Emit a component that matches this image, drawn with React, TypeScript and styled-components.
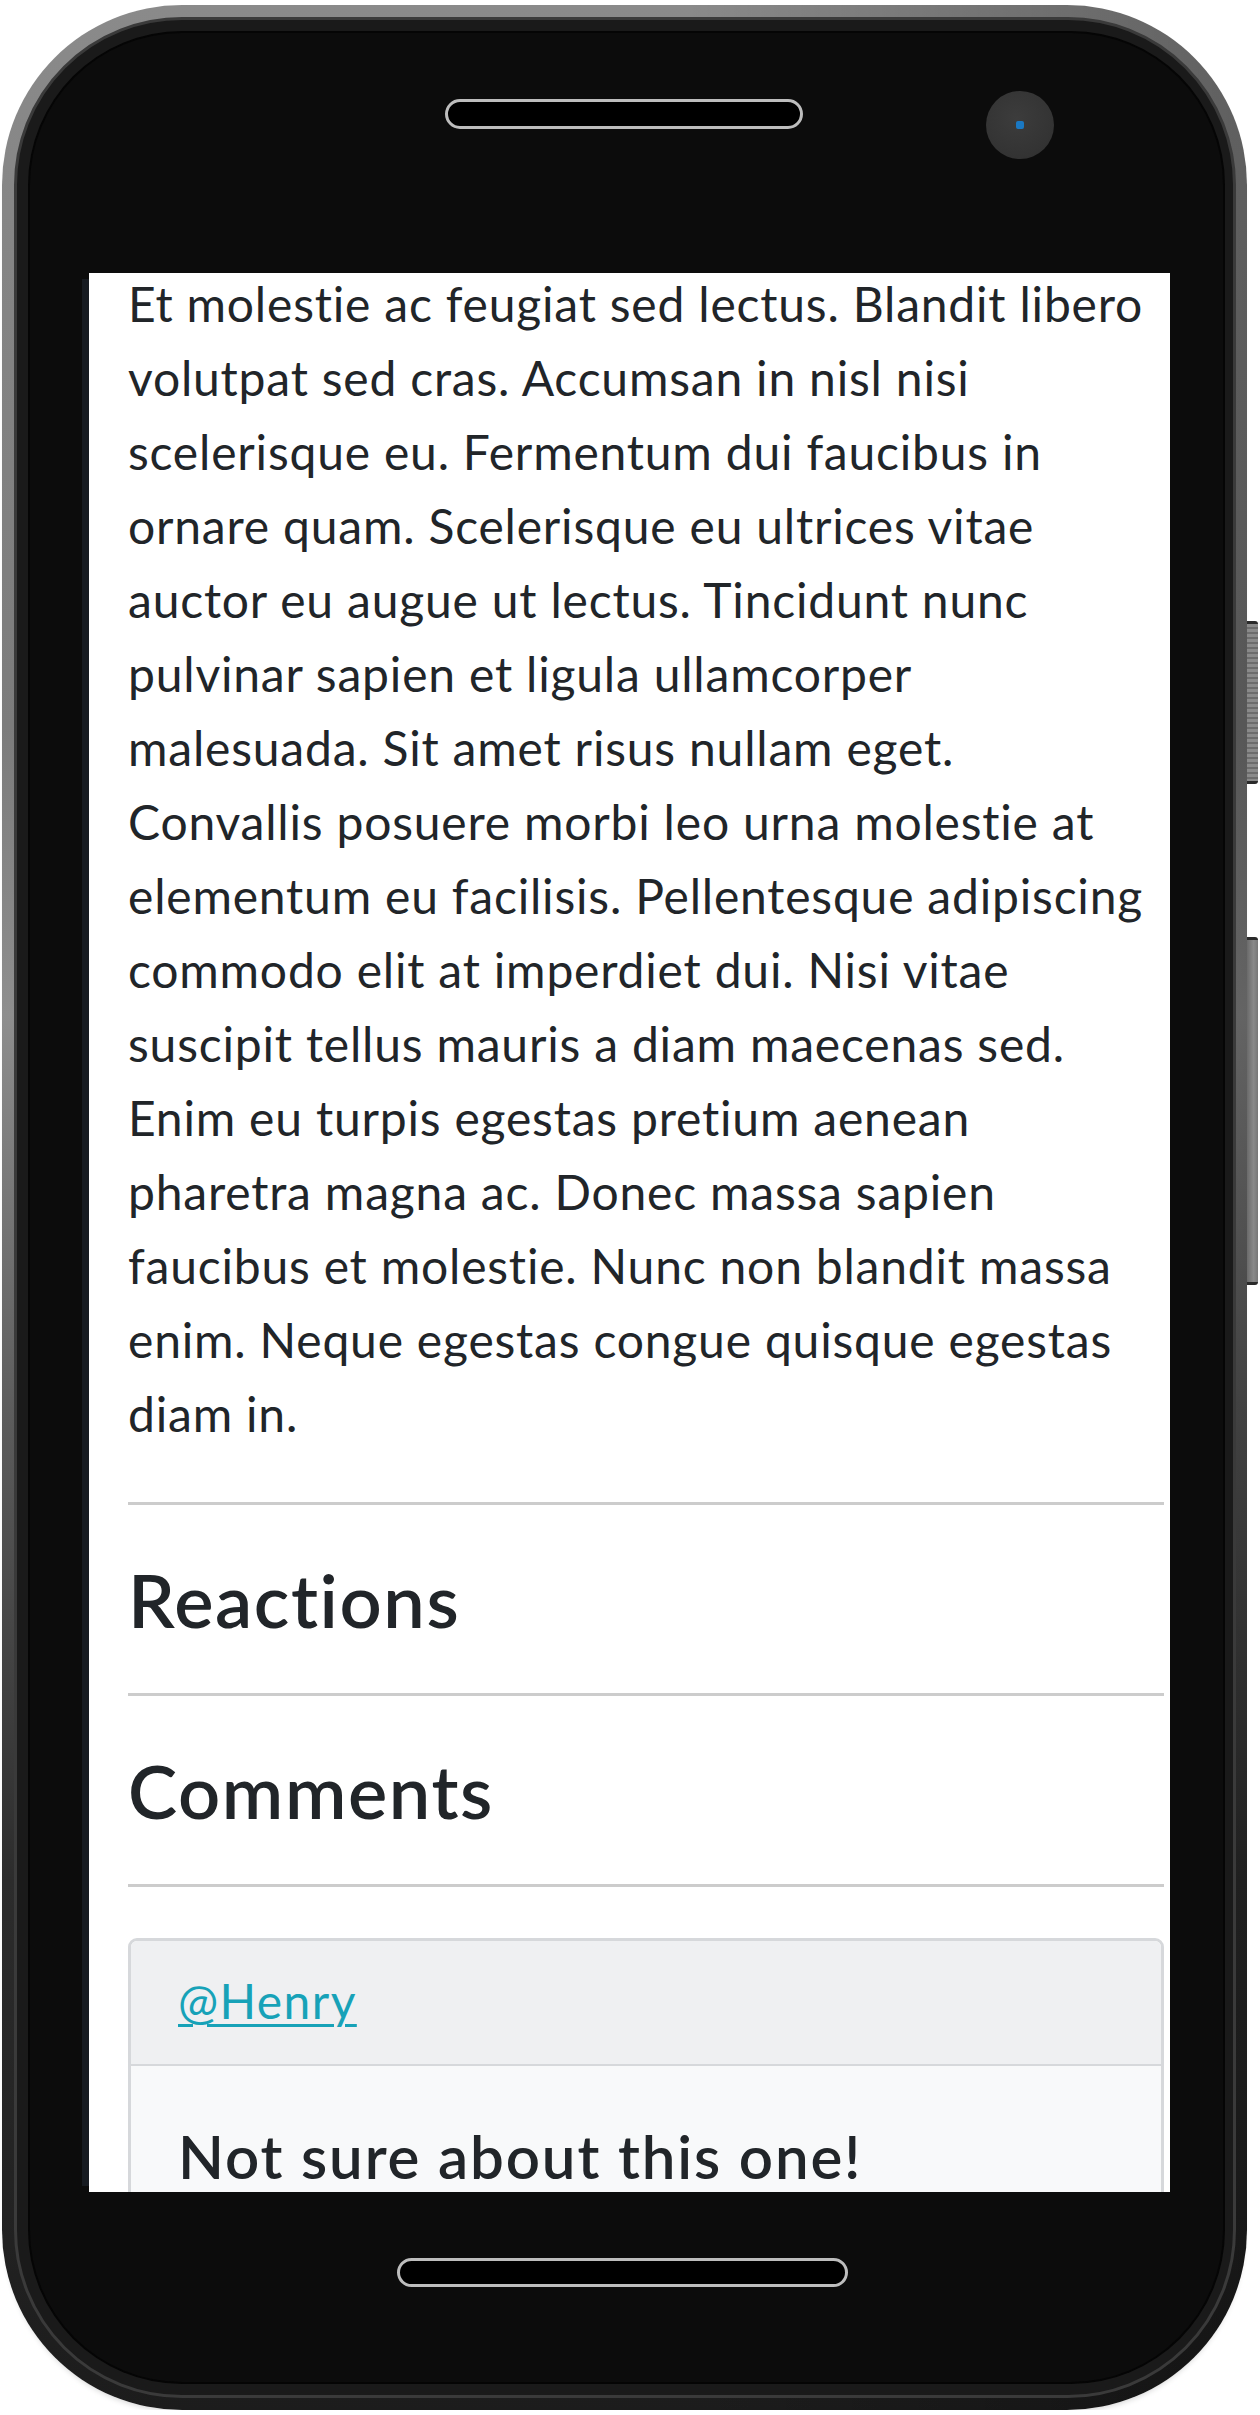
import styled, { createGlobalStyle } from 'styled-components';

const LINES = [
  'Et molestie ac feugiat sed lectus. Blandit libero',
  'volutpat sed cras. Accumsan in nisl nisi',
  'scelerisque eu. Fermentum dui faucibus in',
  'ornare quam. Scelerisque eu ultrices vitae',
  'auctor eu augue ut lectus. Tincidunt nunc',
  'pulvinar sapien et ligula ullamcorper',
  'malesuada. Sit amet risus nullam eget.',
  'Convallis posuere morbi leo urna molestie at',
  'elementum eu facilisis. Pellentesque adipiscing',
  'commodo elit at imperdiet dui. Nisi vitae',
  'suscipit tellus mauris a diam maecenas sed.',
  'Enim eu turpis egestas pretium aenean',
  'pharetra magna ac. Donec massa sapien',
  'faucibus et molestie. Nunc non blandit massa',
  'enim. Neque egestas congue quisque egestas',
  'diam in.',
];

function App(): JSX.Element {
  return (
    <>
      <GlobalStyle />
      <Phone>
        <SideButton $top={616} $height={157} $ridged />
        <SideButton $top={932} $height={342} />
        <Rim>
          <Face>
            <TopBar>
              <Speaker />
              <Camera>
                <Lens />
              </Camera>
            </TopBar>
            <Screen>
              <Content>
                <Body>
                  {LINES.map(line => (
                    <Line key={line}>{line}</Line>
                  ))}
                </Body>
                <Divider />
                <SectionTitle>Reactions</SectionTitle>
                <Divider />
                <SectionTitle>Comments</SectionTitle>
                <Divider />
                <Card>
                  <CardHeader>
                    <UserLink href='#'>@Henry</UserLink>
                  </CardHeader>
                  <CardBody>
                    <CardTitle>Not sure about this one!</CardTitle>
                  </CardBody>
                </Card>
              </Content>
            </Screen>
            <BottomBar>
              <HomeBar />
            </BottomBar>
          </Face>
        </Rim>
      </Phone>
    </>
  );
}

export default App;

const GlobalStyle = createGlobalStyle`
  html, body {
    margin: 0;
    padding: 0;
    background: #ffffff;
  }
  body {
    font-family: Lato, "Open Sans", sans-serif;
    font-variant-ligatures: none;
  }
`;

const Phone = styled.div`
  position: relative;
  box-sizing: border-box;
  width: 1245px;
  height: 2405px;
  margin: 5px 0 0 2px;
  padding: 12px 11px 12px 12px;
  border-radius: 180px;
  background:
    linear-gradient(90deg, rgba(0, 0, 0, 0) 55%, rgba(0, 0, 0, 0.3) 100%),
    linear-gradient(180deg, #8a8a8a 0%, #7c7c7c 30%, #8e8e8e 42%, #5e5e5e 58%, #2c2c2c 78%, #1c1c1c 100%);
  box-shadow: 0 5px 6px -4px rgba(0, 0, 0, 0.2);
`;

const SideButton = styled.div<{ $top: number; $height: number; $ridged?: boolean }>`
  position: absolute;
  right: -11px;
  top: ${props => props.$top}px;
  width: 11px;
  height: ${props => props.$height}px;
  border-radius: 0 3px 3px 0;
  border-top: 3px solid #2a2a2a;
  border-bottom: 3px solid #2a2a2a;
  background: ${props =>
    props.$ridged
      ? 'repeating-linear-gradient(180deg, #8a8a8a 0 3px, #6c6c6c 3px 5px)'
      : 'linear-gradient(90deg, #6a6a6a 0%, #8a8a8a 60%, #777777 100%)'};
`;

const Rim = styled.div`
  box-sizing: border-box;
  height: 100%;
  padding: 13px 10px 13px 13px;
  border: 3px solid #3a3a3a;
  border-radius: 168px;
  background: #1a1a1a;
`;

const Face = styled.div`
  display: flex;
  flex-direction: column;
  height: 100%;
  border-radius: 152px;
  background: #0c0c0c;
  box-shadow: 0 0 0 2px #050505;
  overflow: hidden;
`;

const TopBar = styled.div`
  display: flex;
  align-items: flex-start;
  height: 240px;
  flex-shrink: 0;
`;

const Speaker = styled.div`
  box-sizing: border-box;
  width: 358px;
  height: 30px;
  margin: 66px 0 0 415px;
  border: 3px solid #bdbdbd;
  border-radius: 15px;
  background: #000000;
`;

const Camera = styled.div`
  display: flex;
  align-items: center;
  justify-content: center;
  width: 68px;
  height: 68px;
  margin: 58px 0 0 183px;
  border-radius: 50%;
  background: radial-gradient(circle at 45% 40%, #3c3c3c 0%, #333333 70%, #2a2a2a 100%);
`;

const Lens = styled.div`
  width: 8px;
  height: 8px;
  border-radius: 2px;
  background: #1a78c2;
`;

const Screen = styled.div`
  width: 1081px;
  height: 1919px;
  flex-shrink: 0;
  margin-left: 59px;
  overflow: hidden;
  background: #ffffff;
  box-shadow: -13px 0 0 -6px #171b21;
`;

const Content = styled.div`
  box-sizing: border-box;
  width: 1081px;
  margin-top: -6px;
  padding: 0 6px 0 39px;
  color: #212529;
`;

const Body = styled.p`
  margin: 0;
  font-size: 48px;
  line-height: 74px;
  letter-spacing: 0.8px;
`;

const Line = styled.span`
  display: block;
  white-space: nowrap;
`;

const Divider = styled.hr`
  margin: 0;
  border: 0;
  border-top: 3px solid #cccccc;

  ${Body} + & {
    margin-top: 51px;
  }
`;

const SectionTitle = styled.h2`
  margin: 50px 0 48px;
  font-size: 74px;
  font-weight: 600;
  line-height: 90px;
  letter-spacing: 1.6px;
`;

const Card = styled.div`
  margin-top: 51px;
  border: 3px solid #d6d8db;
  border-radius: 9px;
  overflow: hidden;
`;

const CardHeader = styled.div`
  padding: 23px 0 26px 47px;
  background: #eff0f2;
  border-bottom: 2px solid #d6d8db;
  font-size: 48px;
  line-height: 74px;
  letter-spacing: 1.4px;
`;

const UserLink = styled.a`
  color: #17a2b8;
  text-decoration: underline;
  text-underline-offset: 5px;
  text-decoration-thickness: 3px;
`;

const CardBody = styled.div`
  padding: 55px 0 60px 47px;
  background: #f8f9fa;
`;

const CardTitle = styled.h5`
  margin: 0;
  font-size: 60px;
  font-weight: 600;
  line-height: 70px;
  letter-spacing: 1.85px;
`;

const BottomBar = styled.div`
  display: flex;
  align-items: flex-start;
  flex: 1;
`;

const HomeBar = styled.div`
  box-sizing: border-box;
  width: 451px;
  height: 29px;
  margin: 66px 0 0 367px;
  border: 3px solid #bdbdbd;
  border-radius: 15px;
  background: #000000;
`;
